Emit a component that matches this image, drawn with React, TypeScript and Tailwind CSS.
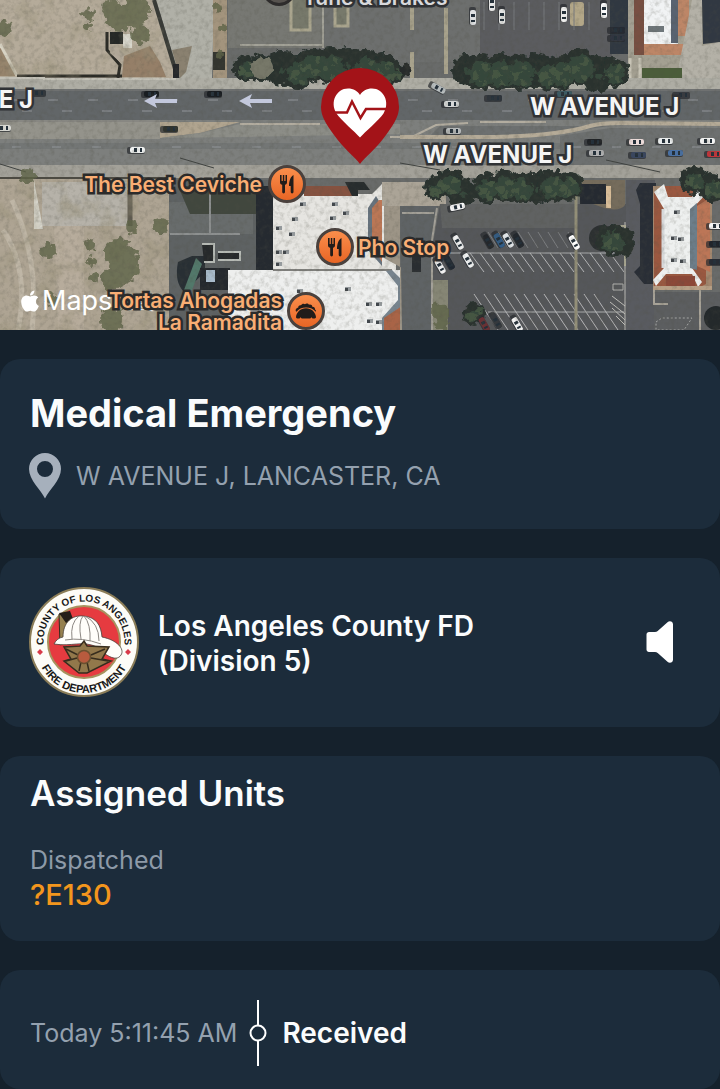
import type { ReactNode } from "react";
import { FaApple } from "react-icons/fa";

type Blob = [x: number, y: number, r: number];
type Car = [x: number, y: number, angle: number, color: string];

const canopies: Blob[] = [
  [246, 68, 13], [262, 68, 14], [282, 68, 18], [298, 72, 17], [312, 64, 16], [330, 66, 18], [348, 64, 17], [366, 68, 18], [384, 70, 16], [396, 74, 10],
  [466, 70, 15], [480, 72, 18], [500, 72, 18], [520, 72, 18], [536, 70, 18], [548, 74, 16], [562, 72, 17], [580, 66, 18], [598, 74, 18], [614, 72, 15],
  [436, 188, 12], [450, 184, 15], [462, 192, 14], [486, 188, 15], [504, 186, 16], [520, 188, 16], [536, 188, 16], [552, 186, 16], [568, 186, 15],
  [612, 240, 16], [622, 242, 14], [474, 314, 11], [694, 180, 14], [712, 188, 14]
];

const scrub: Blob[] = [
  [120, 18, 14], [136, 12, 14], [112, 8, 10], [88, 14, 6], [4, 28, 8], [140, 34, 10], [88, 26, 4],
  [118, 252, 14], [124, 268, 15], [128, 256, 10], [112, 280, 11], [90, 245, 6], [92, 262, 5], [94, 278, 5], [48, 250, 8],
  [52, 300, 7], [112, 320, 12], [132, 227, 6], [160, 226, 8], [28, 176, 8], [218, 8, 5], [222, 28, 4], [220, 54, 4], [440, 312, 9], [442, 322, 7]
];

const cars: Car[] = [
  [38, 93, 0, "#33383c"], [151, 94, 0, "#191d21"], [214, 94, 0, "#191d21"], [137, 150, 0, "#eef0ef"], [3, 128, 0, "#d8d8d2"],
  [170, 129, 0, "#30332e"], [438, 88, 28, "#b9bfc0"], [451, 104, 0, "#d6d8d8"], [453, 131, 0, "#b8bbbb"], [494, 98, 0, "#2f353b"],
  [564, 94, 0, "#3c5b64"], [682, 95, 0, "#383b40"], [594, 142, 0, "#202326"], [636, 142, 0, "#ecdcda"], [665, 141, 0, "#e9ecec"],
  [707, 141, 0, "#f3f4f3"], [596, 153, 0, "#b3b4b5"], [638, 155, 0, "#39465e"], [675, 153, 0, "#4971a5"], [714, 154, 0, "#c0353a"],
  [502, 16, 90, "#e4e5e4"], [564, 14, 90, "#eeeeec"], [604, 10, 90, "#fafafa"], [473, 17, 90, "#e0e2e3"], [492, 3, 90, "#e8e8e8"],
  [617, 30, 0, "#262b33"], [617, 38, 0, "#303540"], [457, 207, -12, "#fafafa"], [458, 242, 60, "#f0f1f1"], [468, 260, 60, "#eef0f0"],
  [440, 266, 60, "#f0f0f0"], [449, 262, 60, "#202832"], [488, 241, 60, "#24272b"], [499, 240, 60, "#315d88"], [508, 240, 60, "#dfe3e6"],
  [518, 240, 60, "#22272d"], [574, 242, 60, "#ffffff"], [517, 324, 60, "#f4f4f4"], [496, 321, 60, "#34383d"], [484, 324, 60, "#6b3034"],
  [716, 226, 0, "#f5f5f5"], [716, 244, 0, "#20242b"], [716, 262, 0, "#272c34"]
];

const roofUnits = [
  [292, 217], [300, 202], [332, 202], [343, 211], [330, 216], [289, 232], [276, 250], [283, 250], [276, 226], [276, 262],
  [297, 289], [345, 287], [366, 302], [376, 302], [367, 319], [376, 320], [674, 210], [671, 236], [678, 237], [671, 258], [680, 259]
];

const upperStalls = Array.from({ length: 15 }, (_, i) => 470 + i * 10);
const lowerStalls = Array.from({ length: 13 }, (_, i) => 474 + i * 10);
const topStalls = Array.from({ length: 8 }, (_, i) => 484 + i * 15);
const dashes = Array.from({ length: 19 }, (_, i) => i * 40 + 8);

const SatelliteImage = () => (
  <svg className="h-full w-full" viewBox="0 0 720 330" preserveAspectRatio="xMidYMid slice" aria-hidden>
    <defs>
      <filter id="rough" x="-20%" y="-20%" width="140%" height="140%">
        <feTurbulence type="fractalNoise" baseFrequency="0.16" numOctaves="2" seed="4" result="n" />
        <feDisplacementMap in="SourceGraphic" in2="n" scale="10" xChannelSelector="R" yChannelSelector="G" />
        <feGaussianBlur stdDeviation="0.6" />
      </filter>
      <filter id="grain" x="0" y="0" width="100%" height="100%">
        <feTurbulence type="fractalNoise" baseFrequency="0.2" numOctaves="3" seed="9" />
        <feColorMatrix values="0 0 0 0 0.08  0 0 0 0 0.08  0 0 0 0 0.06  1.8 0 0 0 -0.78" />
      </filter>
      <filter id="mottle" x="0" y="0" width="100%" height="100%">
        <feTurbulence type="fractalNoise" baseFrequency="0.05" numOctaves="4" seed="2" />
        <feColorMatrix values="0 0 0 0 0.3  0 0 0 0 0.27  0 0 0 0 0.18  0 3 0 0 -1.45" />
      </filter>
    </defs>

    {/* lots north of the street */}
    <rect width="720" height="330" fill="#696b6a" />
    <path d="M0 0H156L176 78H0z" fill="#b5ab9a" />
    <path d="M0 46L16 76H0z" fill="#97836b" />
    <path d="M0 44L17 76" stroke="#d8d3c4" strokeWidth="3" />
    <path d="M124 56L150 46L160 62L166 77H122z" fill="#957f68" />
    <path d="M156 0H214L212 78H180z" fill="#b0b0a7" />
    <path d="M172 50L192 46L186 72L180 78z" fill="#8a8170" />
    <path d="M154 0L176 72" stroke="#383a36" strokeWidth="4" />
    <path d="M17 76H122M107 32V50L120 65L118 78" stroke="#2b2b26" strokeWidth="3" fill="none" />
    <rect x="110" y="32" width="13" height="12" fill="#252826" />
    <rect x="123" y="34" width="9" height="14" fill="#deddd4" />
    <path d="M111 47L125 54L121 63L110 53z" fill="#b4aa9c" />
    <rect x="213" y="0" width="14" height="80" fill="#a3947d" />
    <rect x="213" y="52" width="12" height="18" fill="#33352f" />
    <rect x="173" y="64" width="6" height="14" fill="#25272a" />
    <rect x="228" y="0" width="96" height="48" fill="#777873" />
    <rect x="324" y="0" width="156" height="62" fill="#6d6f6e" />
    <rect x="480" y="0" width="132" height="60" fill="#5b5c5f" />
    <path d="M240 45H322M323 0V48" stroke="#a3a298" strokeWidth="2" />
    <path d="M291 0V30H310V0M335 8V26H348V4" stroke="#aaa58e" strokeWidth="3" fill="#77796b" />
    <path d="M412 0V30M446 8V74M412 52V80" stroke="#a8a28c" strokeWidth="4" />
    <rect x="570" y="2" width="14" height="24" rx="3" fill="#b3a788" />
    {topStalls.map((x) => (
      <path key={x} d={`M${x} 2V30`} stroke="#77797c" />
    ))}
    <rect x="610" y="0" width="24" height="54" fill="#303841" />
    <rect x="628" y="0" width="92" height="80" fill="#a4a092" />
    <rect x="634" y="0" width="10" height="55" fill="#784f42" />
    <rect x="644" y="0" width="34" height="44" fill="#f1f3f4" />
    <path d="M644 44H686V55H644zM678 0H689V36H678z" fill="#bd8667" />
    <path d="M671 0H678V43H671z" fill="#596371" />
    <path d="M648 26H664V32H648z" fill="#6e767a" />
    <path d="M702 0H720V42L703 44z" fill="#313842" />
    <path d="M692 0H702V46L720 42V80H676z" fill="#b4b1a7" />
    <rect x="642" y="68" width="40" height="10" fill="#4b5d3a" />
    <path d="M630 58V80M640 58V80" stroke="#c8c4b6" strokeWidth="3" />

    {/* street */}
    <rect y="78" width="720" height="12" fill="#aeada4" />
    <path d="M0 78H44V79H176" stroke="#c3c1b7" strokeWidth="2" fill="none" />
    <rect y="89" width="720" height="33" fill="#626668" />
    <rect y="120" width="720" height="48" fill="#7d7f7d" />
    <rect y="120" width="160" height="19" fill="#94938b" />
    <path d="M160 122H240L200 133L160 138z" fill="#b0a48f" />
    <path d="M160 138L200 133L240 124H400V134L240 137z" fill="#8c8d87" />
    <path d="M440 126H610L566 132L480 136H430z" fill="#6d7070" />
    <path d="M560 136L610 128H720V168H560z" fill="#6d7070" />
    <path d="M0 143H720V149H0z" fill="#6c6f6f" opacity="0.6" />
    <path d="M240 124H320M390 137H412L436 125L468 123M480 122H546" stroke="#b3ada0" strokeWidth="2" fill="none" />
    <path d="M400 137H480C540 137 570 132 590 126Q600 123 620 123L720 124" stroke="#b5ab98" strokeWidth="4" fill="none" />
    <path d="M0 90H720M0 121H160" stroke="#7c7d7b" />
    {dashes.map((x) => (
      <path key={x} d={`M${x} 100h10M${x + 14} 111h10M${x + 4} 147h9`} stroke="#92959a" />
    ))}
    <path d="M0 165H720V178H0z" fill="#a3a199" />
    <path d="M0 164L26 172M180 158L214 168M400 163L440 170M606 160L660 172" stroke="#3f4240" />
    <path d="M0 178H168" stroke="#4c4a42" strokeWidth="2" />

    {/* lots south of the street */}
    <path d="M0 179H170V330H0z" fill="#aea493" />
    <path d="M42 182H128V226H42z" fill="#b6b2a9" />
    <path d="M54 226H84V330H58z" fill="#b7ac9c" />
    <path d="M34 180L43 229H34z" fill="#d7d5cb" />
    <path d="M3 230Q30 270 18 330M12 200Q40 260 32 330" stroke="#bfb6a6" strokeWidth="5" fill="none" />
    <path d="M130 190V226" stroke="#5d594f" strokeWidth="5" />
    <path d="M169 180H273V330H169z" fill="#5e6263" />
    <path d="M169 202H253V234H169z" fill="#686c6c" />
    <path d="M178 186H256V214H190z" fill="#41473e" />
    <path d="M170 234H240M210 190V234" stroke="#8d9090" strokeWidth="2" />
    <path d="M178 262Q174 282 184 292L205 272V256H192z" fill="#282f34" />
    <path d="M196 258L202 264L192 290H184z" fill="#52786a" />
    <path d="M202 244H214V262H204M218 252H240V260H218" stroke="#b6bab5" strokeWidth="2" fill="#26292b" />
    <path d="M200 268H230V290H200z" fill="#24282d" />
    <rect x="206" y="270" width="9" height="12" fill="#a9bbcb" />
    <path d="M256 186H274V270H256z" fill="#252a30" />
    <path d="M273 194H372L382 184L396 192V270H273z" fill="#e6e5e1" />
    <path d="M304 186H360L356 196H304z" fill="#855240" />
    <path d="M345 182H364L370 190H358V196H352z" fill="#272c2d" />
    <path d="M376 196L382 206V266L368 250V208z" fill="#67737e" />
    <path d="M379 200H382V262L372 246V208z" fill="#bb7756" />
    <path d="M228 270H402V330H228z" fill="#eeefee" />
    <path d="M273 270H392" stroke="#80807d" strokeWidth="2" />
    <path d="M386 271L398 286V300L382 318V330H390L402 312V280L392 270z" fill="#77848e" />
    <path d="M402 306V330H384V318z" fill="#a96447" />
    <path d="M382 182H446V206H382z" fill="#aba497" />
    <path d="M384 206H400V330H402V268L384 258z" fill="#9d9587" />
    <path d="M400 206H438L432 242V330H402z" fill="#5f6365" />
    <path d="M402 213H434M437 208L432 240V330" stroke="#a3a098" strokeWidth="2" fill="none" />
    <rect x="412" y="242" width="9" height="30" fill="#292d31" />
    <path d="M440 204H628V330H433V244z" fill="#55575a" />
    <path d="M440 204H576V228H442z" fill="#606262" />
    <path d="M433 280H448V330H433z" fill="#868675" />
    <path d="M480 180H582V200H480z" fill="#6c7065" />
    <path d="M582 180H625V205Q620 212 604 208L582 200z" fill="#756c5c" />
    <rect x="580" y="184" width="26" height="20" fill="#252a31" />
    <rect x="606" y="186" width="5" height="22" fill="#d8bd98" />
    {upperStalls.map((x) => (
      <path key={x} d={`M${x} 253l14 19`} stroke="#b4b5b6" />
    ))}
    {upperStalls.slice(0, 9).map((x) => (
      <path key={x} d={`M${x + 18} 232l10 16`} stroke="#7c7e80" />
    ))}
    {lowerStalls.map((x) => (
      <path key={x} d={`M${x} 294l24 36`} stroke="#b6b7b8" />
    ))}
    <path d="M444 253H620M488 312H624" stroke="#aeb0b0" />
    <path d="M576 192V330" stroke="#938f78" strokeWidth="3" />
    <path d="M612 296L625 306M610 302L625 314M612 308L625 320M616 316L625 325M625 222V330" stroke="#bebdb8" />
    <path d="M612 226H625V266" stroke="#a7a590" strokeWidth="2" fill="none" />
    <path d="M613 284H623V290H613z" stroke="#b4b4b0" fill="none" />
    <circle cx="602" cy="238" r="13" fill="#2c3031" />

    {/* detached building on the east side */}
    <path d="M626 180H655V330H626z" fill="#595b60" />
    <path d="M636 190L640 183H656V284H644L634 272L640 266V204z" fill="#292e36" />
    <path d="M653 186H704L712 200V290H653z" fill="#a4886f" />
    <path d="M654 192L665 186H696L706 196V284L698 288H654z" fill="#9a5840" />
    <path d="M697 206L710 198V272L697 266z" fill="#bc7657" />
    <path d="M654 192L664 184L668 197H692L698 188L706 194L692 209V268L702 282L698 287L692 274H666L656 286L653 280L664 268V209z" fill="#eef0ef" />
    <path d="M690 209L697 203V270L690 268z" fill="#6d7e8a" />
    <path d="M663 209V268" stroke="#d7d9da" strokeWidth="3" />
    <path d="M666 276H695V286H666z" fill="#8c4838" />
    <path d="M653 288H712" stroke="#b8a086" strokeWidth="4" />
    <path d="M654 292H720V330H654z" fill="#5c5e60" />
    <path d="M654 290V304H668M700 290V330" stroke="#a8a398" strokeWidth="2" fill="none" />
    <path d="M656 322L662 318H692L684 330H656z" stroke="#a3a4a3" fill="none" strokeDasharray="2 2" />
    <circle cx="716" cy="318" r="12" fill="#24292b" />

    <rect width="170" height="77" filter="url(#mottle)" opacity="0.45" />
    <rect y="180" width="169" height="150" filter="url(#mottle)" opacity="0.45" />

    <g filter="url(#rough)">
      <g fill="#5f6449" opacity="0.8">
        {scrub.map(([x, y, r]) => (
          <circle key={`${x}-${y}`} cx={x} cy={y} r={r} />
        ))}
      </g>
      <g fill="#29332f">
        {canopies.map(([x, y, r]) => (
          <circle key={`${x}-${y}`} cx={x} cy={y} r={r} />
        ))}
      </g>
      <g fill="#35463a">
        {canopies.map(([x, y, r], i) => (
          <circle key={`${x}-${y}`} cx={x + 1} cy={y + 2} r={i % 4 === 2 ? 3 : r - 5} />
        ))}
      </g>
      <g fill="#4a5c46">
        {canopies.map(([x, y, r], i) => (
          <g key={`${x}-${y}`} opacity={i % 4 === 2 ? 0 : 0.8}>
            <circle cx={x - 4} cy={y + 3} r="4" />
            <circle cx={x + 5} cy={y - 4} r="3" />
            <circle cx={x + 3} cy={y + r - 7} r="3" />
          </g>
        ))}
      </g>
      <circle cx="262" cy="68" r="11" fill="#777869" />
      <circle cx="405" cy="69" r="6" fill="#272c2b" />
    </g>

    {roofUnits.map(([x, y]) => (
      <g key={`${x}-${y}`}>
        <rect x={x} y={y} width="6" height="4" fill="#969b9e" />
        <rect x={x} y={y + 1} width="3" height="3" fill="#42474c" />
      </g>
    ))}

    {cars.map(([x, y, angle, color]) => (
      <g key={`${x}-${y}`} transform={`translate(${x} ${y}) rotate(${angle})`}>
        <rect x="-10" y="-3" width="18" height="7" rx="2" fill="#25282c" opacity="0.7" />
        <rect x="-7" y="-3" width="15" height="6" rx="2" fill={color} />
        <rect x="-3" y="-2" width="3" height="4" fill="#24303a" />
        <rect x="3" y="-2" width="2" height="4" fill="#24303a" />
      </g>
    ))}

    <rect width="720" height="330" filter="url(#grain)" opacity="0.3" />

    {/* one-way arrows */}
    <g fill="#c3c8dc">
      <path d="M144 101L157 94L155 99H177V103H155L157 108z" />
      <path d="M239 101L252 94L250 99H272V103H250L252 108z" />
    </g>
  </svg>
);

const MapLabel = ({ className, children }: { className: string; children: ReactNode }) => (
  <span className={`absolute whitespace-nowrap [paint-order:stroke_fill] ${className}`}>{children}</span>
);

const street = "text-2xl leading-7 font-bold text-[#f5f5f5] [-webkit-text-stroke:5px_#303235]";
const place = "text-[21px] leading-[22px] font-semibold text-[#f9ae74] [-webkit-text-stroke:5px_#2b2b2b]";

const PlaceBadge = ({ className, children }: { className: string; children: ReactNode }) => (
  <span
    className={`absolute flex size-[38px] items-center justify-center rounded-full border-[3px] border-[#4a413d] bg-linear-to-b from-[#fa8e4b] to-[#e86524] ${className}`}
  >
    {children}
  </span>
);

const ForkKnife = () => (
  <svg viewBox="0 0 20 22" className="h-[22px] w-5" fill="#211c1a" aria-hidden>
    <path d="M3 2h1.6v6h1.2V2h1.5v6h1.2V2H10v7.2c0 1.4-.8 2.2-2 2.6V19a1.4 1.4 0 0 1-2.8 0v-7.2C3.8 11.4 3 10.6 3 9.2z" />
    <path d="M16.5 2v17a1.4 1.4 0 0 1-2.8 0v-6H12c0-5 1.5-9.5 4.5-11z" />
  </svg>
);

const Taco = () => (
  <svg viewBox="0 0 24 18" className="h-[18px] w-6" fill="#211c1a" aria-hidden>
    <path d="M2.5 9.8C.8 8.500 2 5.800 4.200 5.800 4 3.800 5.600 2.800 7 3.300 7.800 1.500 10 1.200 11 2.300c1-1.300 3.300-1.100 4 .5 1.500-.7 3.300.3 3.300 2 1.800-.1 3 1.300 2.700 2.700 1 .6 1.200 1.500.8 2.300C19.500 7 16 5.500 12 5.500S4.500 7 2.500 9.800z" />
    <path d="M12 6.200c5.500 0 9.600 4 10 8.800 0 .9-.5 1.400-1.300 1.400h-2.200l-1-1.200-1.200 1.200H7.700l-1.200-1.200-1 1.200H3.300C2.500 16.400 2 15.900 2 15c.4-4.800 4.500-8.800 10-8.800z" />
  </svg>
);

const IncidentPin = () => (
  <svg viewBox="0 0 80 98" className="absolute top-[67px] left-1/2 h-[98px] w-20 -translate-x-1/2" role="img" aria-label="Medical emergency">
    <path d="M40 97C35 90 24 82 14 68 6 57 1 49 1 40a39 39 0 0 1 78 0c0 9-5 17-13 28C56 82 45 90 40 97z" fill="#a31318" />
    <path
      d="M40 70.500C35 65 21 53 16.500 46.500 9.500 35 16.500 21.500 28 21.500c5.500 0 9.500 2.500 12 6.500 2.500-4 6.500-6.500 12-6.500 11.500 0 18.500 13.500 11.500 25C59 53 45 65 40 70.500z"
      fill="#fff"
    />
    <path d="M13 45.500h14L32 34.500l8.500 16.500 5.500-9h21" fill="none" stroke="#a31318" strokeWidth="2.500" />
  </svg>
);

const IncidentMap = () => (
  <section className="relative h-[330px] overflow-hidden" aria-label="Incident map">
    <SatelliteImage />
    <span className="absolute -top-7 left-[262px] size-[34px] rounded-full border-[3px] border-[#2e2c2c] bg-[#57534f]" />
    <MapLabel className="-top-4 left-[303px] text-[21px] leading-7 font-semibold text-[#d8d9dc] [-webkit-text-stroke:5px_#303235]">
      Tune &amp; Brakes
    </MapLabel>
    <MapLabel className={`top-[86px] right-[687px] ${street}`}>W AVENUE J</MapLabel>
    <MapLabel className={`top-[93px] left-[530px] ${street}`}>W AVENUE J</MapLabel>
    <MapLabel className={`top-[141px] left-[423px] ${street}`}>W AVENUE J</MapLabel>

    <a href="#maps" className="absolute top-[283px] left-[18px] flex items-center text-white">
      <FaApple className="size-6" aria-hidden />
      <span className="text-[27px] leading-9">Maps</span>
    </a>
    <a href="#legal" className="absolute top-[292px] left-[129px] text-base leading-5 text-[#e2e2e2] underline">
      Legal
    </a>

    <MapLabel className={`top-[174px] right-[458px] ${place}`}>The Best Ceviche</MapLabel>
    <PlaceBadge className="top-[165px] left-[268px]">
      <ForkKnife />
    </PlaceBadge>
    <MapLabel className={`top-[237px] left-[358px] ${place}`}>Pho Stop</MapLabel>
    <PlaceBadge className="top-[228px] left-[316px]">
      <ForkKnife />
    </PlaceBadge>
    <MapLabel className={`top-[290px] right-[438px] text-right ${place}`}>
      Tortas Ahogadas
      <br />
      La Ramadita
    </MapLabel>
    <PlaceBadge className="top-[292px] left-[287px]">
      <Taco />
    </PlaceBadge>
    <IncidentPin />
  </section>
);

const DepartmentSeal = () => (
  <svg viewBox="0 0 110 110" className="size-[110px] shrink-0" role="img" aria-label="County of Los Angeles Fire Department">
    <defs>
      <path id="seal-top" d="M17 69A40.500 40.500 0 1 1 93 69" />
      <path id="seal-bottom" d="M7 58A48 48 0 0 0 103 58" />
    </defs>
    <circle cx="55" cy="55" r="54" fill="#fdfcf7" stroke="#8b7d58" strokeWidth="2" />
    <circle cx="55" cy="55" r="36" fill="#e63b40" stroke="#a6935f" strokeWidth="2" />
    <g fill="#191919" className="font-['Liberation_Sans',Arial,sans-serif] font-bold" textAnchor="middle">
      <text className="text-[10px]">
        <textPath href="#seal-top" startOffset="50%">COUNTY OF LOS ANGELES</textPath>
      </text>
      <text className="text-[11px]">
        <textPath href="#seal-bottom" startOffset="50%">FIRE DEPARTMENT</textPath>
      </text>
    </g>
    <path d="M11 62l3 3-3 3-3-3zM99 62l3 3-3 3-3-3z" fill="#d83a49" />
    <path d="M30 27L42 29 46 36 36 44 35 55 31 58z" fill="#96814f" stroke="#372c1c" />
    <path d="M30 26L41 24 44 32 37 36z" fill="#251e18" />
    <path d="M25 57Q28 51 34 50C34 35 43 28 54 29 68 30 72 39 73 50 88 53 96 62 92 68 87 76 75 67 68 60 53 53 43 60 25 57z" fill="#fffefa" stroke="#49433c" strokeWidth="0.8" />
    <path d="M36 53Q53 50 72 57M43 52Q41 36 50 29M52 52Q49 35 54 29M61 54Q62 37 55 29M70 54Q70 36 56 29" fill="none" stroke="#8c8883" />
    <path d="M55 54L58 59 80 60 73 72 82 74 58 86H50L35 74 42 72 35 60 51 59z" fill="#92784b" stroke="#372d1e" strokeWidth="1.500" />
    <path d="M37 62L49 68M76 62L62 68M50 84L52 75M60 84L58 75M37 74L48 71M79 74L62 71" stroke="#372d1e" strokeWidth="1.500" />
    <circle cx="55" cy="70" r="6.500" fill="#b85b3e" stroke="#6a5030" strokeWidth="1.500" />
  </svg>
);

const Card = ({ className, children }: { className: string; children: ReactNode }) => (
  <section className={`rounded-[20px] bg-[#1c2c3b] px-[30px] ${className}`}>{children}</section>
);

const App = () => (
  <main className="flex min-h-screen flex-col gap-[29px] overflow-hidden bg-[#15212c] font-['Inter',sans-serif] text-[#fafcfd]">
    <IncidentMap />

    <Card className="pt-8 pb-[30px]">
      <h1 className="text-[38px] leading-[45px] font-bold">Medical Emergency</h1>
      <div className="mt-[17px] flex items-center gap-[15px]">
        <svg viewBox="0 0 32 46" className="-ml-px h-[46px] w-8" fill="#a6b0bc" aria-hidden>
          <path fillRule="evenodd" d="M16 45.500C12 37 0 27 0 16a16 16 0 0 1 32 0c0 11-12 21-16 29.500zM16 8a8 8 0 1 0 0 16 8 8 0 0 0 0-16z" />
        </svg>
        <p className="text-[25px] leading-8 text-[#94a1af]">W AVENUE J, LANCASTER, CA</p>
      </div>
    </Card>

    <Card className="flex items-center pt-[29px] pb-[30px]">
      <div className="-ml-px flex flex-1 items-center gap-[19px]">
        <DepartmentSeal />
        <h2 className="max-w-[340px] pt-1 text-[28px] leading-[35px] font-semibold">Los Angeles County FD (Division 5)</h2>
      </div>
      <button type="button" className="mr-4 flex h-11 w-7 items-center" aria-label="Play dispatch audio">
        <svg viewBox="0 0 28 44" className="h-11 w-7" fill="#fff" aria-hidden>
          <path d="M3 12h6c1 0 2-.4 2.700-1L21.500 2.200C23.500.500 27 1.200 27 4.500v35c0 3.300-3.500 4-5.500 2.300L11.700 33c-.7-.6-1.700-1-2.700-1H3c-1.400 0-2.500-1-2.500-2.500v-15C.5 13 1.600 12 3 12z" />
        </svg>
      </button>
    </Card>

    <Card className="pt-4 pb-[29px]">
      <h2 className="text-[35px] leading-[42px] font-semibold">Assigned Units</h2>
      <h3 className="mt-7 text-[25px] leading-9 text-[#8d9aa8]">Dispatched</h3>
      <p className="text-[29px] leading-[34px] font-medium text-[#f3961d]">?E130</p>
    </Card>

    <Card className="flex flex-1 items-start pt-[30px]">
      <div className="flex items-center">
        <time className="text-[25px] leading-8 text-[#94a1af]">Today 5:11:45 AM</time>
        <svg viewBox="0 0 18 66" className="mr-[15px] ml-3 h-[66px] w-[18px]" fill="none" stroke="#fff" strokeWidth="2" aria-hidden>
          <path d="M9 0V25M9 41V66" />
          <circle cx="9" cy="33" r="7.500" />
        </svg>
        <span className="text-[28px] leading-9 font-semibold">Received</span>
      </div>
    </Card>
  </main>
);

export default App;
